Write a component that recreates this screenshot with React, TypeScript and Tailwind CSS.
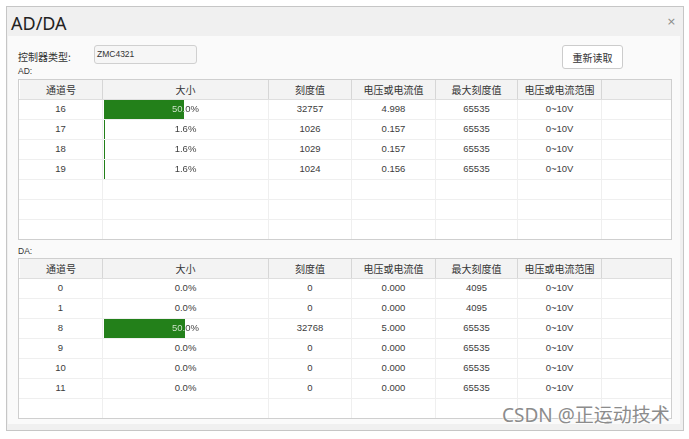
import React from "react";

type Row = { ch: string; pct: string; bar: number; scale: string; val: string; max: string; range: string };

const AD: Row[] = [
  { ch: "16", pct: "50.0%", bar: 80, scale: "32757", val: "4.998", max: "65535", range: "0~10V" },
  { ch: "17", pct: "1.6%", bar: 1, scale: "1026", val: "0.157", max: "65535", range: "0~10V" },
  { ch: "18", pct: "1.6%", bar: 1, scale: "1029", val: "0.157", max: "65535", range: "0~10V" },
  { ch: "19", pct: "1.6%", bar: 1, scale: "1024", val: "0.156", max: "65535", range: "0~10V" },
];

const DA: Row[] = [
  { ch: "0", pct: "0.0%", bar: 0, scale: "0", val: "0.000", max: "4095", range: "0~10V" },
  { ch: "1", pct: "0.0%", bar: 0, scale: "0", val: "0.000", max: "4095", range: "0~10V" },
  { ch: "8", pct: "50.0%", bar: 81, scale: "32768", val: "5.000", max: "65535", range: "0~10V" },
  { ch: "9", pct: "0.0%", bar: 0, scale: "0", val: "0.000", max: "65535", range: "0~10V" },
  { ch: "10", pct: "0.0%", bar: 0, scale: "0", val: "0.000", max: "65535", range: "0~10V" },
  { ch: "11", pct: "0.0%", bar: 0, scale: "0", val: "0.000", max: "65535", range: "0~10V" },
];

const HEAD = ["通道号", "大小", "刻度值", "电压或电流值", "最大刻度值", "电压或电流范围", ""];
const W = ["w-[84px]", "w-[166px]", "w-[83px]", "w-[84px]", "w-[82px]", "w-[84px]", "flex-1"];

const cjk = "font-['Noto_Sans_CJK_SC',sans-serif]";
const num = "font-['Liberation_Sans','Noto_Sans_CJK_SC',sans-serif]";
const TEXT = "#3c3c3c";

function DataRow({ r }: { r?: Row }) {
  const cells = r ? [r.ch, r.pct, r.scale, r.val, r.max, r.range, ""] : ["", "", "", "", "", "", ""];
  return (
    <div className="flex h-[20px] shrink-0 border-b border-[#efefef]">
      {cells.map((c, i) => {
        const isBar = i === 1 && r && r.bar > 0;
        return (
          <div
            key={i}
            className={`${W[i]} ${i < 6 ? "border-r border-[#efefef]" : ""} relative flex items-center justify-center text-[9.5px] text-[#3c3c3c] ${num}`}
          >
            {isBar && (
              <div className="absolute left-[1px] top-0 bottom-0 bg-[#23801a]" style={{ width: r!.bar }} />
            )}
            {isBar ? (
              <div
                className="absolute inset-0 flex items-center justify-center bg-clip-text text-transparent"
                style={{
                  backgroundImage: `linear-gradient(to right, #d9e8d5 0px, #d9e8d5 ${r!.bar + 1}px, ${TEXT} ${r!.bar + 1}px, ${TEXT} 100%)`,
                }}
              >
                {c}
              </div>
            ) : (
              c
            )}
          </div>
        );
      })}
    </div>
  );
}

function Table({ rows }: { rows: Row[] }) {
  const empties = 7 - rows.length;
  return (
    <div className="w-[654px] h-[161px] border border-[#cfcfcf] bg-white overflow-hidden flex flex-col">
      <div className="flex h-[20px] shrink-0 bg-[#f3f3f3] border-b border-[#dedede]">
        {HEAD.map((h, i) => (
          <div
            key={i}
            className={`${W[i]} ${i < 6 ? "border-r border-[#d6d6d6]" : ""} ${i === 0 ? "border-l border-l-white" : ""} flex items-center justify-center text-[10px] text-[#333] ${cjk}`}
          >
            {h}
          </div>
        ))}
      </div>
      {rows.map((r, i) => (
        <DataRow key={i} r={r} />
      ))}
      {Array.from({ length: empties }).map((_, i) => (
        <DataRow key={"e" + i} />
      ))}
    </div>
  );
}

export default function App() {
  return (
    <div className={`relative w-[689px] h-[439px] bg-white pt-[6px] pl-[6px] ${cjk}`}>
      <div className="w-[678px] h-[425px] border border-[#c6c6c6] bg-[#f0f0f0] flex flex-col">
        <div className="h-[29px] shrink-0 flex items-center justify-between pl-[4px] pr-[7px]">
          <span className="text-[18px] text-[#222] font-['Noto_Sans',sans-serif] leading-none mt-[2px]">AD/DA</span>
          <span className="text-[11px] text-[#8a8a8a] font-['DejaVu_Sans',sans-serif] leading-none">×</span>
        </div>
        <div className="ml-[1px] w-[672px] h-[388px] bg-[#fafafa] pl-[10px] pt-[9px] flex flex-col">
          <div className="flex items-start h-[20px]">
            <div className="w-[76px] h-[20px] leading-[23px] text-[10px] text-[#333]">控制器类型:</div>
            <div className={`w-[103px] h-[19px] rounded-[3px] border border-[#d0d0d0] bg-[#f6f6f6] pl-[2px] text-[8.5px] leading-[17px] text-[#333] ${num}`}>
              ZMC4321
            </div>
            <div className="ml-[365px] w-[61px] h-[24px] rounded-[3px] border border-[#cccccc] bg-white flex items-center justify-center text-[10px] text-[#333]">
              重新读取
            </div>
          </div>
          <div className={`h-[12px] leading-[12px] text-[8.5px] text-[#333] ${num}`}>AD:</div>
          <div className="mt-[2px]">
            <Table rows={AD} />
          </div>
          <div className={`mt-[5px] h-[12px] leading-[12px] text-[8.5px] text-[#333] ${num}`}>DA:</div>
          <div className="mt-[1px]">
            <Table rows={DA} />
          </div>
        </div>
      </div>
      <div className="absolute left-[502px] top-[403px] text-[19px] leading-[24px] text-[#8c8c8c] font-['Noto_Sans','Noto_Sans_CJK_SC',sans-serif] [text-shadow:0_0_2px_#fff,0_0_2px_#fff]">
        CSDN @正运动技术
      </div>
    </div>
  );
}
